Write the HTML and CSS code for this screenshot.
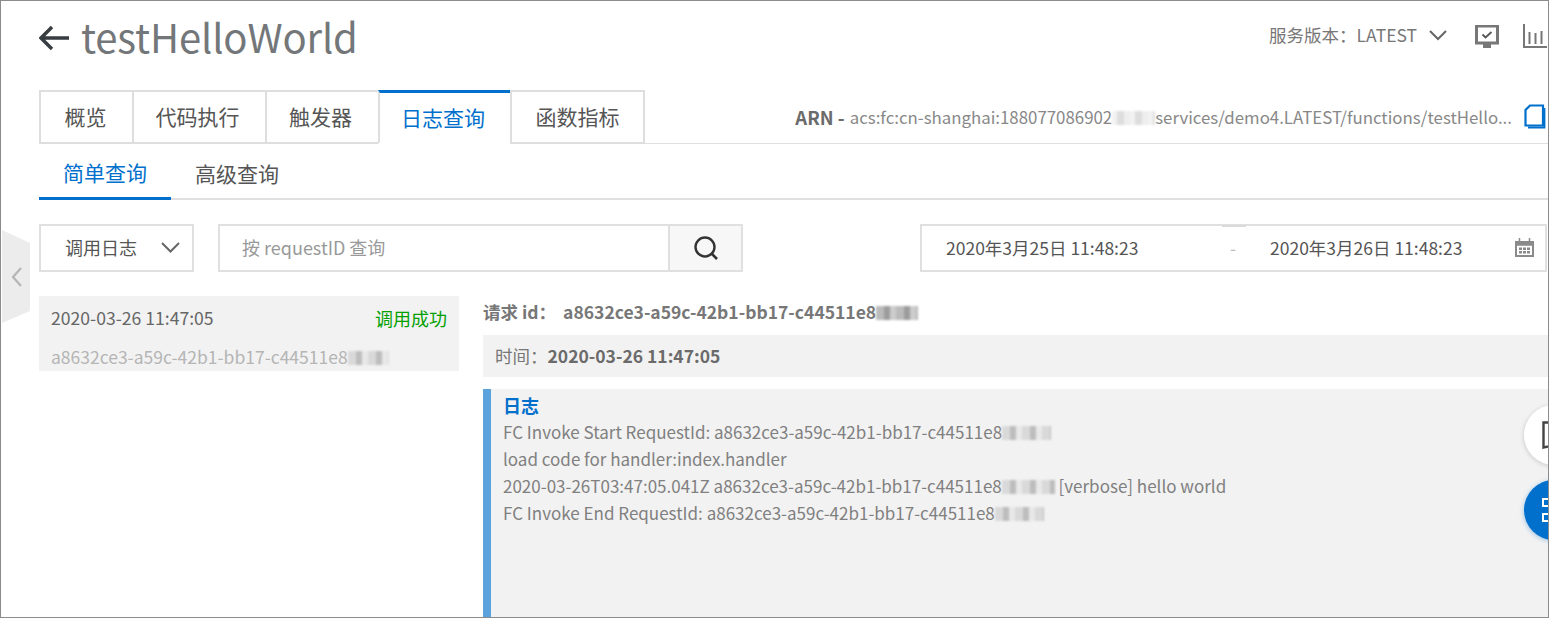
FILE: index.html
```html
<!DOCTYPE html>
<html lang="zh">
<head>
<meta charset="utf-8">
<title>testHelloWorld</title>
<link rel="stylesheet" href="styles.css">
</head>
<body>
<div class="frame">
  <header class="top">
    <div class="title-group">
      <svg class="back" width="30" height="26" viewBox="0 0 30 26"><path d="M13 2 2 13l11 11M2 13h28" fill="none" stroke="#373d41" stroke-width="3.4"/></svg>
      <h1 class="title">testHelloWorld</h1>
    </div>
    <div class="top-right">
      <span class="version">服务版本：LATEST</span>
      <svg class="ver-caret" width="18" height="11" viewBox="0 0 18 11"><path d="M1 1l8 8 8-8" fill="none" stroke="#666" stroke-width="2"/></svg>
      <svg class="icon-screen" width="24" height="23" viewBox="0 0 24 23"><path d="M1.500 1h21v17h-21z" fill="none" stroke="#777" stroke-width="3"/><path d="M8 23h8v-4H8z" fill="#777"/><path d="M7.500 9.500l3 3 6-5.500" fill="none" stroke="#555" stroke-width="1.800"/></svg>
      <svg class="icon-chart" width="24" height="24" viewBox="0 0 24 24"><path d="M1 0v23h23" fill="none" stroke="#777" stroke-width="2"/><path d="M6.500 8v12M12.500 9v11M18.500 7v13" fill="none" stroke="#777" stroke-width="2"/></svg>
    </div>
  </header>

  <div class="tabs-row">
    <nav class="tabs">
      <a class="tab">概览</a>
      <a class="tab">代码执行</a>
      <a class="tab">触发器</a>
      <a class="tab active">日志查询</a>
      <a class="tab">函数指标</a>
    </nav>
    <div class="arn">
      <b>ARN -</b>
      <span class="arn-val">acs:fc:cn-shanghai:188077086902<i class="mask mask-arn"></i>services/demo4.LATEST/functions/testHello...</span>
      <svg class="copy" width="22" height="25" viewBox="0 0 22 25"><path d="M6 1.500h13v20H1.500V6z" fill="none" stroke="#0070cc" stroke-width="2.200"/><path d="M20.500 4v19.500H4" fill="none" stroke="#0070cc" stroke-width="1.800"/></svg>
    </div>
  </div>

  <div class="subtabs">
    <a class="subtab active">简单查询</a>
    <a class="subtab">高级查询</a>
  </div>

  <div class="filters">
    <div class="select">
      <span>调用日志</span>
      <svg width="19" height="11" viewBox="0 0 19 11"><path d="M1 1l8.500 8.500L18 1" fill="none" stroke="#666" stroke-width="2"/></svg>
    </div>
    <div class="search">
      <div class="search-input">按 requestID 查询</div>
      <div class="search-btn">
        <svg width="26" height="26" viewBox="0 0 26 26"><circle cx="12" cy="12" r="9.500" fill="none" stroke="#333" stroke-width="2.400"/><path d="M18 18l6 6" stroke="#333" stroke-width="2.600"/></svg>
      </div>
    </div>
    <div class="dates">
      <i class="date-notch"></i>
      <span class="date-a">2020年3月25日 11:48:23</span>
      <span class="date-sep">-</span>
      <span class="date-b">2020年3月26日 11:48:23</span>
      <svg width="19" height="19" viewBox="0 0 19 19"><path d="M1 4h17v14H1z" fill="none" stroke="#8a8a8a" stroke-width="2"/><path d="M1 4h17v3H1zM4.500 0v4M14.500 0v4" fill="#8a8a8a" stroke="#8a8a8a" stroke-width="1.500"/><path d="M4 9.500h3v2.500H4zM8 9.500h3v2.500H8zM12 9.500h3v2.500h-3zM4 13h3v2.500H4zM8 13h3v2.500H8zM12 13h3v2.500h-3z" fill="#8a8a8a"/></svg>
    </div>
  </div>

  <main class="content">
    <aside class="list">
      <div class="item">
        <div class="item-row">
          <span class="item-time">2020-03-26 11:47:05</span>
          <span class="item-status">调用成功</span>
        </div>
        <div class="item-id">a8632ce3-a59c-42b1-bb17-c44511e8<i class="mask mask-list"></i></div>
      </div>
    </aside>
    <section class="detail">
      <div class="req">请求 id：<span class="req-val">a8632ce3-a59c-42b1-bb17-c44511e8<i class="mask mask-req"></i></span></div>
      <div class="time-row">时间：<b>2020-03-26 11:47:05</b></div>
      <div class="log">
        <div class="log-title">日志</div>
        <div class="log-line">FC Invoke Start RequestId: a8632ce3-a59c-42b1-bb17-c44511e8<i class="mask mask-log"></i></div>
        <div class="log-line">load code for handler:index.handler</div>
        <div class="log-line">2020-03-26T03:47:05.041Z a8632ce3-a59c-42b1-bb17-c44511e8<i class="mask mask-log-wide"></i> [verbose] hello world</div>
        <div class="log-line">FC Invoke End RequestId: a8632ce3-a59c-42b1-bb17-c44511e8<i class="mask mask-log"></i></div>
      </div>
    </section>
  </main>

  <div class="handle">
    <svg width="11" height="20" viewBox="0 0 11 20"><path d="M10 1 2 10l8 9" fill="none" stroke="#b5b5b5" stroke-width="2.200"/></svg>
  </div>

  <div class="fab fab-white">
    <svg width="24" height="28" viewBox="0 0 24 28"><path d="M1.500 1.500h21v20L1.500 26.500z" fill="none" stroke="#444" stroke-width="2.400"/></svg>
  </div>
  <div class="fab fab-blue">
    <svg width="24" height="26" viewBox="0 0 24 26"><path d="M1 2h7v7H1zM1 17h7v7H1zM14 2h7v7h-7zM14 17h7v7h-7z" fill="none" stroke="#fff" stroke-width="2"/></svg>
  </div>
</div>
</body>
</html>
```
FILE: styles.css
```css
* { box-sizing: border-box; }
html, body { margin: 0; padding: 0; background: #fff; }
body {
  font-family: "Noto Sans CJK SC", "Noto Sans", sans-serif;
  color: #666;
  overflow: hidden;
}
.frame {
  position: relative;
  width: 1549px;
  height: 618px;
  border: 1px solid #8c8c8c;
  padding-left: 38px;
  overflow: hidden;
}
.top {
  display: flex;
  justify-content: space-between;
  height: 89px;
}
.title-group { display: flex; align-items: center; height: 74px; }
.back { margin-right: 12px; flex: none; }
.title {
  margin: -4px 0 0;
  font-size: 40px;
  font-weight: 400;
  line-height: 76px;
  letter-spacing: -0.15px;
  color: #73777a;
}
.top-right {
  display: flex;
  align-items: center;
  height: 70px;
  margin-right: 1px;
}
.version { font-size: 17.5px; color: #777; margin: -4px 12px 0 0; }
.ver-caret { margin: -2px 28px 0 0; flex: none; }
.icon-screen { margin: 0 24px 0 0; flex: none; }
.icon-chart { flex: none; }

.tabs-row {
  display: flex;
  justify-content: space-between;
  height: 54px;
  border-bottom: 1px solid #e0e0e0;
}
.tabs { display: flex; height: 54px; flex: none; }
.tab {
  display: flex;
  align-items: center;
  justify-content: center;
  height: 54px;
  font-size: 21px;
  color: #555;
  border: 2px solid #dedede;
  border-right-width: 0;
  padding: 0 2px 2px 0;
}
.tab:nth-child(1) { width: 93px; }
.tab:nth-child(2) { width: 133px; padding-right: 4px; }
.tab:nth-child(3) { width: 113px; padding-right: 4px; }
.tab:nth-child(4) { width: 132px; padding-right: 4px; }
.tab:nth-child(5) { width: 135px; border-right-width: 2px; padding-right: 0; }
.tab.active {
  color: #0070cc;
  border-top: 3px solid #0070cc;
  border-bottom-color: #fff;
}
.arn {
  display: flex;
  align-items: center;
  height: 53px;
  font-size: 16.85px;
  color: #888;
  white-space: nowrap;
  margin-right: 2px;
}
.arn b { color: #6b6b6b; font-weight: 700; font-size: 18.5px; margin-right: 5px; }
.arn-val { margin-right: 12px; }
.copy { flex: none; }

.mask {
  display: inline-block;
  height: 14px;
  vertical-align: -1px;
  background: repeating-linear-gradient(90deg, #d9d9d9 0 8px, #bdbdbd 8px 14px, #e8e8e8 14px 20px);
  filter: blur(1px);
}
.mask-arn { width: 43px; background: repeating-linear-gradient(90deg, #f2f2f2 0 5px, #ddd 5px 12px, #eee 12px 18px); }
.mask-list { width: 41px; }
.mask-req { width: 42px; background: repeating-linear-gradient(90deg, #bbb 0 8px, #9c9c9c 8px 14px, #ccc 14px 20px); }
.mask-log { width: 49px; }
.mask-log-wide { width: 53px; }

.subtabs {
  display: flex;
  height: 56px;
  border-bottom: 2px solid #e0e0e0;
}
.subtab {
  display: flex;
  align-items: center;
  justify-content: center;
  height: 56px;
  padding: 2px 24px 0;
  font-size: 21px;
  color: #555;
}
.subtab.active { color: #0070cc; border-bottom: 3px solid #0070cc; }

.filters {
  display: flex;
  height: 48px;
  margin-top: 24px;
  margin-right: 1px;
}
.select {
  display: flex;
  align-items: center;
  justify-content: space-between;
  width: 155px;
  padding: 0 12px 2px 24px;
  font-size: 18px;
  color: #555;
  border: 2px solid #e0e0e0;
  margin-right: 24px;
}
.search {
  display: flex;
  width: 525px;
  border: 2px solid #e0e0e0;
  margin-right: 177px;
}
.search-input {
  flex: 1;
  display: flex;
  align-items: center;
  padding: 0 0 2px 22px;
  font-size: 18px;
  color: #999;
}
.search-btn {
  width: 73px;
  display: flex;
  align-items: center;
  justify-content: center;
  background: #f7f7f7;
  border-left: 2px solid #e0e0e0;
}
.dates {
  position: relative;
  flex: 1;
  display: flex;
  align-items: center;
  border: 2px solid #e0e0e0;
  font-size: 17.5px;
  color: #555;
  padding: 0 11px 2px 24px;
  white-space: nowrap;
}
.date-notch {
  position: absolute;
  left: 300px;
  top: -1px;
  width: 24px;
  height: 2px;
  background: #dadada;
}
.date-a { width: 284px; }
.date-sep { width: 40px; color: #bbb; }
.date-b { flex: 1; }

.content {
  display: flex;
  margin-top: 24px;
}
.list { width: 420px; margin-right: 24px; flex: none; }
.item {
  height: 75px;
  background: #f2f2f2;
  padding: 7px 12px 0;
}
.item-row {
  display: flex;
  justify-content: space-between;
  font-size: 17.6px;
  line-height: 30px;
}
.item-status { color: #00a000; font-size: 18px; }
.item-id { font-size: 17.5px; line-height: 30px; margin-top: 9px; color: #b5b5b5; }
.detail { flex: 1; }
.req {
  font-size: 17.5px;
  line-height: 32px;
  font-weight: 700;
  color: #777;
}
.req-val { margin-left: 7px; }
.time-row {
  margin-top: 7px;
  height: 42px;
  background: #f2f2f2;
  padding-left: 12px;
  font-size: 17.5px;
  line-height: 42px;
  color: #777;
}
.time-row b { color: #6b6b6b; }
.log {
  margin-top: 12px;
  height: 228px;
  background: #f2f2f2;
  border-left: 8px solid #5ba3dc;
  padding: 3px 0 0 12px;
}
.log-title { font-size: 18px; font-weight: 700; line-height: 26px; color: #0070cc; }
.log-line { font-size: 17px; line-height: 27px; color: #808080; white-space: nowrap; }

.handle {
  position: absolute;
  left: 1px;
  top: 229px;
  width: 28px;
  height: 93px;
  background: #ececec;
  clip-path: polygon(0 0, 100% 14%, 100% 87%, 0 100%);
  display: flex;
  align-items: center;
  padding-left: 9px;
}
.fab {
  position: absolute;
  left: 1523px;
  width: 60px;
  height: 60px;
  border-radius: 50%;
  display: flex;
  align-items: center;
  padding-left: 18px;
}
.fab-white { top: 404px; background: #fff; box-shadow: 0 1px 5px rgba(0,0,0,.18); }
.fab-blue { top: 479px; background: #0070cc; box-shadow: 0 1px 5px rgba(0,112,204,.4); }
```
